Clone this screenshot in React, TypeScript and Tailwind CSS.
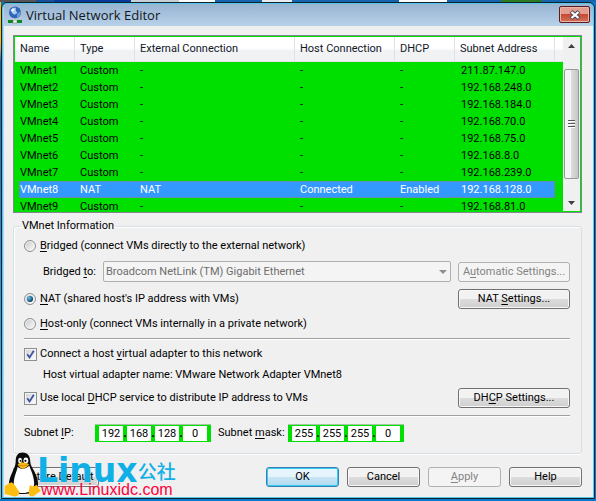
import type { ReactNode } from 'react'
import clsx from 'clsx'

interface Network {
    name: string
    type: string
    external: string
    host: string
    dhcp: string
    subnet: string
}

const networks: Network[] = [
    { name: 'VMnet1', type: 'Custom', external: '-', host: '-', dhcp: '-', subnet: '211.87.147.0' },
    { name: 'VMnet2', type: 'Custom', external: '-', host: '-', dhcp: '-', subnet: '192.168.248.0' },
    { name: 'VMnet3', type: 'Custom', external: '-', host: '-', dhcp: '-', subnet: '192.168.184.0' },
    { name: 'VMnet4', type: 'Custom', external: '-', host: '-', dhcp: '-', subnet: '192.168.70.0' },
    { name: 'VMnet5', type: 'Custom', external: '-', host: '-', dhcp: '-', subnet: '192.168.75.0' },
    { name: 'VMnet6', type: 'Custom', external: '-', host: '-', dhcp: '-', subnet: '192.168.8.0' },
    { name: 'VMnet7', type: 'Custom', external: '-', host: '-', dhcp: '-', subnet: '192.168.239.0' },
    { name: 'VMnet8', type: 'NAT', external: 'NAT', host: 'Connected', dhcp: 'Enabled', subnet: '192.168.128.0' },
    { name: 'VMnet9', type: 'Custom', external: '-', host: '-', dhcp: '-', subnet: '192.168.81.0' },
]

const columns = ['Name', 'Type', 'External Connection', 'Host Connection', 'DHCP', 'Subnet Address']
const selected = 'VMnet8'

function Key({ children }: { children: ReactNode }) {
    return <span className="underline underline-offset-2">{children}</span>
}

interface ButtonProps {
    children: ReactNode
    className?: string
    primary?: boolean
    disabled?: boolean
}

function Button({ children, className, primary, disabled }: ButtonProps) {
    return (
        <button
            type="button"
            disabled={disabled}
            className={clsx(
                'h-5 shrink-0 rounded-[3px] border whitespace-nowrap text-center leading-4',
                disabled && 'border-[#adb2b5] bg-[#f4f4f4] text-[#838383]',
                primary && 'border-[#3c7fb1] bg-linear-to-b from-[#e6f4fb] from-50% via-[#c9e6f5] via-50% to-[#b2d9ef] ring-1 ring-inset ring-[#31cdf5]',
                !disabled && !primary && 'border-[#707070] bg-linear-to-b from-[#f2f2f2] from-50% via-[#dddddd] via-50% to-[#cfcfcf] ring-1 ring-inset ring-[#f8f8f8]',
                className,
            )}
        >
            {children}
        </button>
    )
}

interface RadioProps {
    id: string
    checked?: boolean
    children: ReactNode
}

function Radio({ id, checked, children }: RadioProps) {
    return (
        <div className="flex h-5 items-center gap-1">
            <span className="grid place-items-center">
                <input
                    type="radio"
                    id={id}
                    name="mode"
                    defaultChecked={checked}
                    className="peer col-start-1 row-start-1 size-3 appearance-none rounded-full border border-[#8e8f8f] bg-linear-to-br from-[#c4c8cc] to-white ring-1 ring-inset ring-[#f4f4f4]"
                />
                <span className="pointer-events-none invisible col-start-1 row-start-1 size-[6px] rounded-full bg-radial-[at_35%_35%] from-[#5fc4ee] to-[#0b3f66] to-70% peer-checked:visible" />
            </span>
            <label htmlFor={id}>{children}</label>
        </div>
    )
}

function Checkbox({ id, children }: { id: string; children: ReactNode }) {
    return (
        <div className="flex h-5 items-center gap-[3px]">
            <span className="grid place-items-center">
                <input
                    type="checkbox"
                    id={id}
                    defaultChecked
                    className="peer col-start-1 row-start-1 size-[13px] appearance-none border border-[#8e8f8f] bg-linear-to-br from-[#ccd0d6] to-white ring-1 ring-inset ring-[#f4f4f4]"
                />
                <svg viewBox="0 0 13 13" className="pointer-events-none invisible col-start-1 row-start-1 size-[13px] peer-checked:visible">
                    <path d="M3.2 6.2 5.6 9.4 9.8 2.8" fill="none" stroke="#3d539c" strokeWidth="1.8" />
                </svg>
            </span>
            <label htmlFor={id}>{children}</label>
        </div>
    )
}

function IpField({ label, octets }: { label: string; octets: string[] }) {
    return (
        <div role="group" aria-label={label} className="flex h-[18px] items-stretch border-t border-[#a5c9a5] bg-[#00e000] px-1 py-px">
            {octets.map((octet, i) => (
                <div key={i} className="flex">
                    {i > 0 && <span className="w-1 text-center text-[12px] leading-[15px] font-bold text-black">.</span>}
                    <input
                        aria-label={`${label} ${i + 1}`}
                        defaultValue={octet}
                        className="w-6 bg-white text-center leading-[15px]"
                    />
                </div>
            ))}
        </div>
    )
}

function Divider() {
    return <hr className="border-t border-b border-t-[#a0a0a0] border-b-white" />
}

function TitleBar() {
    return (
        <header className="flex h-[22px] items-start justify-between bg-linear-to-b from-[#98b4d1] to-[#b9d1ea] px-[3px]">
            <div className="flex items-center gap-[3px] pt-px">
                <svg viewBox="0 0 16 18" className="h-[18px] w-4">
                    <rect x="6" y="12" width="4" height="4" fill="#d8dde2" />
                    <rect x="1" y="14" width="14" height="3" fill="#0a8a1c" />
                    <rect x="6" y="14" width="4" height="3" fill="#eef2f4" stroke="#777" strokeWidth=".5" />
                    <circle cx="8" cy="6.5" r="6" fill="#2d66b8" />
                    <path d="M3.5 4.5Q6 .5 9 2 8 5 10.500 6.500 8 10 5.500 7.500Z" fill="#a9cdf0" />
                    <path d="M10 8.500 13.500 5Q14 10 10 12Z" fill="#6d9fdd" />
                    <circle cx="5.800" cy="4" r="1.500" fill="#fff" opacity=".8" />
                </svg>
                <h1 className="font-['Open_Sans',sans-serif] text-[13px] leading-5 text-[#101820]">Virtual Network Editor</h1>
            </div>
            <button
                type="button"
                aria-label="Close"
                className="mt-[2px] flex h-[17px] w-[31px] items-center justify-center rounded-[2px] border border-[#5b1c1c] bg-linear-to-b from-[#e39d91] from-45% via-[#c4442d] via-45% to-[#d3705c] ring-1 ring-inset ring-[#eab5ab]"
            >
                <svg viewBox="0 0 12 10" className="h-[10px] w-3">
                    <path d="M2 1.500 10 8.500M10 1.500 2 8.500" stroke="#4b4b58" strokeWidth="4" />
                    <path d="M2.500 2 9.500 8M9.500 2 2.500 8" stroke="#fff" strokeWidth="2.200" />
                </svg>
            </button>
        </header>
    )
}

function ScrollBar() {
    return (
        <div className="flex w-[17px] shrink-0 flex-col items-center bg-[#f0f0f0]">
            <svg viewBox="0 0 17 17" className="h-[17px] w-full">
                <path d="M5 11 8.500 7 12 11Z" fill="#3f3f3f" />
            </svg>
            <div className="mt-[15px] flex h-[110px] w-[15px] items-center justify-center rounded-[2px] border border-[#979797] bg-linear-to-r from-[#f4f4f4] from-45% via-[#dcdcdc] via-50% to-[#c6c6c6]">
                <svg viewBox="0 0 7 8" className="h-2 w-[7px]">
                    <path d="M0 .5H7M0 3.500H7M0 6.500H7" stroke="#555" />
                    <path d="M0 1.500H7M0 4.500H7M0 7.500H7" stroke="#fff" />
                </svg>
            </div>
            <svg viewBox="0 0 17 17" className="mt-auto h-[17px] w-full">
                <path d="M5 7 8.500 11 12 7Z" fill="#3f3f3f" />
            </svg>
        </div>
    )
}

function NetworkList() {
    return (
        <div className="flex h-[178px] border border-[#828790] bg-[#00e000] p-px">
            <div className="min-w-0 flex-1 overflow-hidden">
                <table className="w-full table-fixed border-separate border-spacing-0 text-left">
                    <colgroup>
                        <col className="w-[60px]" />
                        <col className="w-[60px]" />
                        <col className="w-[160px]" />
                        <col className="w-[100px]" />
                        <col className="w-[60px]" />
                        <col className="w-[100px]" />
                        <col />
                    </colgroup>
                    <thead>
                        <tr className="h-[25px] bg-linear-to-b from-white from-45% to-[#f1f2f4] to-55%">
                            {columns.map(col => (
                                <th key={col} scope="col" className="border-r border-b border-[#dfe2e6] px-[5px] font-normal text-[#101828]">
                                    {col}
                                </th>
                            ))}
                            <td className="border-b border-[#dfe2e6]" />
                        </tr>
                    </thead>
                    <tbody>
                        {networks.map(net => {
                            const active = net.name === selected
                            const cell = clsx(
                                'h-[17px] p-0 leading-[15px]',
                                active && 'border-y border-dotted border-[#8a8478] bg-[#3399ff] text-white',
                            )
                            return (
                                <tr key={net.name}>
                                    <td className="p-0 pl-1">
                                        <div className={clsx(cell, active ? 'border-l' : 'pt-px pl-px')}>{net.name}</div>
                                    </td>
                                    <td className={clsx(cell, 'pl-[5px]')}>{net.type}</td>
                                    <td className={clsx(cell, 'pl-[5px]')}>{net.external}</td>
                                    <td className={clsx(cell, 'pl-[5px]')}>{net.host}</td>
                                    <td className={clsx(cell, 'pl-[5px]')}>{net.dhcp}</td>
                                    <td className={clsx(cell, 'pl-[6px]', active && 'border-r')}>{net.subnet}</td>
                                    <td />
                                </tr>
                            )
                        })}
                    </tbody>
                </table>
            </div>
            <ScrollBar />
        </div>
    )
}

function Penguin() {
    return (
        <svg viewBox="0 0 38 46" className="h-[45px] w-[37px] shrink-0">
            <path d="M19 .5C25 .5 27 5 27 10 27 16 35 22 35 33 35 40 30 43 20 43 9 43 5 40 5 34 5 24 12 17 12 10 12 4 14 .5 19 .5Z" fill="#0b0b0b" />
            <path d="M14 15C17 18 22 18 26 14 28 20 31 25 31 33 30 40 25 42 19 42 13 42 10 39 10 33 10 25 13 21 14 15Z" fill="#fff" />
            <ellipse cx="16.500" cy="8.500" rx="2" ry="2.800" fill="#fff" />
            <ellipse cx="22.500" cy="8.500" rx="2.500" ry="3" fill="#fff" />
            <circle cx="17" cy="9" r="1" />
            <circle cx="22" cy="9" r="1.100" />
            <path d="M14 12.500C17 10 21 10 26 12.500 24 15.500 21 17 19 17 17 17 15 15 14 12.500Z" fill="#f8b714" />
            <path d="M14.500 13.500Q20 15 25.500 13" fill="none" stroke="#a86d00" strokeWidth=".6" />
            <path d="M1 34.500C3 34 5 31.500 8 31 11 33 13 37 15.500 40.500 16.500 43 14 45.500 11 45.500 8 45 4 43.500 .5 43 1.500 40 0 37 1 34.500Z" fill="#fcbf10" />
            <path d="M26.500 34C27.500 33.500 29 36.500 32 34.500 34 32.500 34.500 34.500 35 36 36 38 38 39 37.500 40 34.500 42 32 44.500 29 45.500 26 45.500 25 43.500 25.500 40.500Z" fill="#fcbf10" />
        </svg>
    )
}

function Watermark() {
    return (
        <div className="pointer-events-none absolute bottom-0 left-0 flex items-end">
            <Penguin />
            <div className="flex flex-col">
                <div className="flex items-center text-[#10b0e6]">
                    <span className="-ml-1 font-['DejaVu_Sans',sans-serif] text-[33px] leading-6 font-bold">Linux</span>
                    <span className="font-['Noto_Sans_CJK_SC',sans-serif] text-[19px] leading-6 font-medium">公社</span>
                </div>
                <span className="font-['Liberation_Sans',sans-serif] text-[16px] leading-[14px] text-[#fa003c]">www.Linuxidc.com</span>
            </div>
        </div>
    )
}

export default function App() {
    return (
        <div className="flex min-h-screen flex-col bg-[#0878cf] font-[Roboto,sans-serif] text-[11px] leading-4 text-black">
            {/* slice of the desktop behind the window */}
            <div className="flex h-[2px] bg-[#1464b0]">
                <span className="w-[6%] bg-[#555]" />
                <span className="w-[3%] bg-[#14509c]" />
                <span className="w-[13%] bg-[#083c9c]" />
                <span className="w-[8%] bg-[#c8d0d8]" />
                <span className="w-[6%] bg-white" />
                <span className="w-[8%] bg-[#1464b0]" />
                <span className="w-[5%] bg-[#e8eef0]" />
                <span className="w-[18%] bg-[#1464b0]" />
                <span className="w-[8%] bg-white" />
                <span className="w-[9%] bg-[#1464b0]" />
                <span className="w-[7%] bg-[#2c7a20]" />
            </div>
            <div className="mb-[2px] flex flex-1 pr-px">
                <div className="w-px bg-linear-to-b from-[#f8c000] from-8% via-[#0868b8] via-12% to-[#58c8f0]" />
                <div className="flex flex-1 flex-col rounded-t-md border border-[#14202c] bg-[#54c8ea] p-px">
                    <div className="flex flex-1 flex-col overflow-hidden rounded-t-[5px] bg-[#b9d1ea] pl-px">
                        <TitleBar />
                        <main className="relative flex flex-1 flex-col bg-[#f0f0f0] pt-[9px] pr-[11px] pb-[9px] pl-[9px]">
                            <NetworkList />

                            <fieldset className="mt-[5px] min-w-0 rounded-[3px] border border-[#d5dfe5] pt-[2px] pr-[11px] pb-[11px] pl-[10px] shadow-[inset_1px_1px_0_#fff,0_1px_0_#fff]">
                                <legend className="-ml-1 px-[2px]">VMnet Information</legend>

                                <Radio id="bridged"><Key>B</Key>ridged (connect VMs directly to the external network)</Radio>
                                <div className="mt-[5px] flex items-center pl-[19px]">
                                    <label htmlFor="bridgedTo" className="w-[60px]">Bridged <Key>t</Key>o:</label>
                                    <div className="grid min-w-0 flex-1 items-center">
                                        <select
                                            id="bridgedTo"
                                            disabled
                                            className="col-start-1 row-start-1 h-[21px] appearance-none rounded-[2px] border border-[#afafaf] bg-[#f4f4f4] pl-[2px] text-[#6d6d6d] opacity-100"
                                        >
                                            <option>Broadcom NetLink (TM) Gigabit Ethernet</option>
                                        </select>
                                        <svg viewBox="0 0 8 4" className="pointer-events-none col-start-1 row-start-1 mr-1 h-1 w-2 justify-self-end">
                                            <path d="M0 0H8L4 4Z" fill="#8f8f8f" />
                                        </svg>
                                    </div>
                                    <Button disabled className="ml-[7px] w-28">A<Key>u</Key>tomatic Settings...</Button>
                                </div>
                                <div className="mt-[7px] flex items-center justify-between">
                                    <Radio id="nat" checked><Key>N</Key>AT (shared host's IP address with VMs)</Radio>
                                    <Button className="w-28">NAT <Key>S</Key>ettings...</Button>
                                </div>
                                <div className="mt-[5px] mb-1">
                                    <Radio id="hostOnly"><Key>H</Key>ost-only (connect VMs internally in a private network)</Radio>
                                </div>
                                <Divider />
                                <div className="mt-1">
                                    <Checkbox id="adapter">Connect a host <Key>v</Key>irtual adapter to this network</Checkbox>
                                </div>
                                <p className="mt-[3px] mb-[5px] pl-[19px]">Host virtual adapter name: VMware Network Adapter VMnet8</p>
                                <div className="mb-[7px] flex items-center justify-between">
                                    <Checkbox id="dhcp">Use local <Key>D</Key>HCP service to distribute IP address to VMs</Checkbox>
                                    <Button className="w-28">DH<Key>C</Key>P Settings...</Button>
                                </div>
                                <Divider />
                                <div className="mt-[7px] flex items-center">
                                    <span className="w-[71px]">Subnet <Key>I</Key>P:</span>
                                    <IpField label="Subnet IP" octets={['192', '168', '128', '0']} />
                                    <span className="ml-[7px] w-[70px]">Subnet <Key>m</Key>ask:</span>
                                    <IpField label="Subnet mask" octets={['255', '255', '255', '0']} />
                                </div>
                            </fieldset>

                            <div className="mt-[13px] flex gap-2">
                                <Button className="mr-auto w-[86px]">R<Key>e</Key>store Default</Button>
                                <Button primary className="w-[73px]">OK</Button>
                                <Button className="w-[73px]">Cancel</Button>
                                <Button disabled className="w-[73px]"><Key>A</Key>pply</Button>
                                <Button className="w-[73px]">Help</Button>
                            </div>
                            <Watermark />
                        </main>
                    </div>
                </div>
            </div>
        </div>
    )
}
